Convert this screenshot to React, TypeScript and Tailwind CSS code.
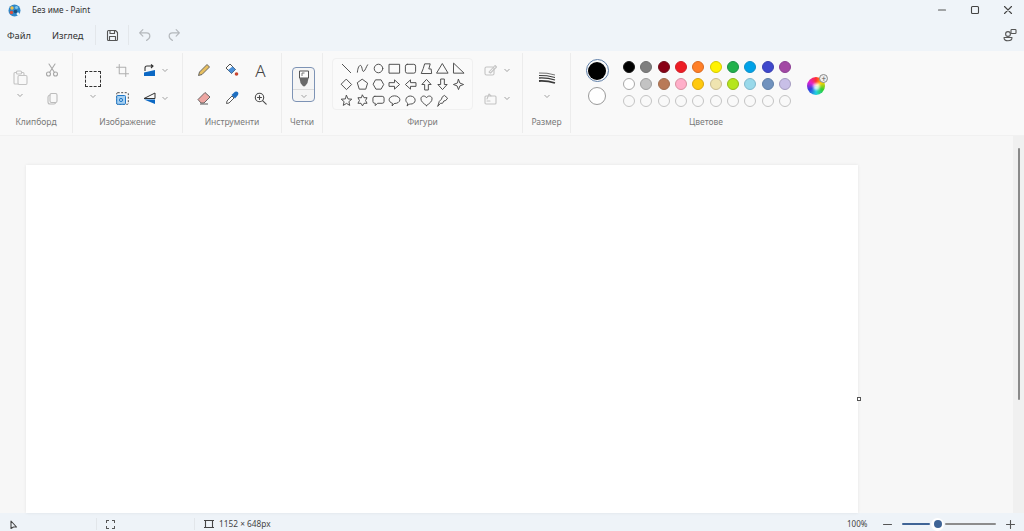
import { ReactNode } from "react"

const font = "font-['Noto_Sans',sans-serif]"

const Chevron = ({ className = "" }: { className?: string }) => (
  <svg width="8" height="8" viewBox="0 0 8 8" fill="none" stroke="#969696" strokeWidth="0.9" className={className}>
    <path d="M1.5 3 L4 5.5 L6.5 3" />
  </svg>
)

const Ico = ({ size = 14, vb = 14, children, stroke = "#4a4a4a", sw = 1.1 }: { size?: number; vb?: number; children: ReactNode; stroke?: string; sw?: number }) => (
  <svg width={size} height={size} viewBox={`0 0 ${vb} ${vb}`} fill="none" stroke={stroke} strokeWidth={sw} strokeLinejoin="round" strokeLinecap="round">
    {children}
  </svg>
)

const Label = ({ children }: { children: ReactNode }) => (
  <div className="h-[20px] pt-[1px] flex items-center justify-center text-[8.5px] text-[#7a7a7a] leading-none">{children}</div>
)

const shapes = [
  <path d="M2.5 2.5 L11.5 11.5" />,
  <path d="M1.5 11 C2 4 5 2 6 5 C7 8 7 11 8.5 10 C10 9 11 5 12.5 3" />,
  <circle cx="7" cy="7" r="4.6" />,
  <rect x="1.5" y="2.5" width="11" height="9.5" />,
  <rect x="1.5" y="2.5" width="11" height="9.5" rx="2" />,
  <path d="M1.5 12 L3.5 7 L5 2 H11 L9.5 7.5 H12 L12.5 12 Z" />,
  <path d="M7 2 L13 12 H1 Z" />,
  <path d="M2 1.5 L13 12 H2 Z" />,
  <path d="M7 1.5 L12.5 7 L7 12.5 L1.5 7 Z" />,
  <path d="M7 1.5 L12.5 5.5 L10.5 12 H3.5 L1.5 5.5 Z" />,
  <path d="M4.2 2 H9.8 L12.6 7 L9.8 12 H4.2 L1.4 7 Z" />,
  <path d="M1.5 5 H7 V2 L12.5 7 L7 12 V9 H1.5 Z" />,
  <path d="M12.5 5 H7 V2 L1.5 7 L7 12 V9 H12.5 Z" />,
  <path d="M5 12.5 V7 H2 L7 1.5 L12 7 H9 V12.5 Z" />,
  <path d="M5 1.5 V7 H2 L7 12.5 L12 7 H9 V1.5 Z" />,
  <path d="M7 1.5 L8.5 5.5 L12.5 7 L8.5 8.5 L7 12.5 L5.5 8.5 L1.5 7 L5.5 5.5 Z" />,
  <path d="M7 1.5 L8.6 5.3 L12.7 5.6 L9.6 8.2 L10.5 12.3 L7 10.1 L3.5 12.3 L4.4 8.2 L1.3 5.6 L5.4 5.3 Z" />,
  <path d="M7 1.2 L8.6 4 H11.9 L10.3 7 L11.9 10 H8.6 L7 12.8 L5.4 10 H2.1 L3.7 7 L2.1 4 H5.4 Z" />,
  <path d="M3 2.5 H11 Q13 2.5 13 4.5 V8 Q13 10 11 10 H6 L3.5 12.5 V10 H3 Q1 10 1 8 V4.5 Q1 2.5 3 2.5 Z" />,
  <path d="M4.5 12.5 L4.8 10 C2.6 9.3 1.2 7.9 1.2 6.2 C1.2 3.9 3.8 2 7 2 C10.2 2 12.8 3.9 12.8 6.2 C12.8 8.5 10.2 10.3 7 10.3 Z" />,
  <path d="M3.5 12.5 L4 10 C2.5 9 1.8 7.6 2 6 C2.3 3.6 4.5 2 7.2 2.2 C10 2.4 12.2 4.4 12 7 C11.8 9.4 9.5 11 7 10.8 C6 10.8 5 11.2 3.5 12.5 Z" />,
  <path d="M7 12.5 C3.5 10 1 8 1 5.2 C1 3.4 2.4 2.2 4 2.2 C5.2 2.2 6.3 2.9 7 4 C7.7 2.9 8.8 2.2 10 2.2 C11.6 2.2 13 3.4 13 5.2 C13 8 10.5 10 7 12.5 Z" />,
  <path d="M2 13 L3.5 8 L6 5.5 L6.5 3.5 L9 1.5 L12.5 4.5 L10.5 7 L8.5 7.5 L7 10 H5 L2 13" />,
]

const palette = [
  ["border-[#1a1a1a]", "bg-[#000000]"], ["border-[#6f6f6f]", "bg-[#7f7f7f]"], ["border-[#6f0f1b]", "bg-[#880015]"], ["border-[#d01f28]", "bg-[#ed1c24]"], ["border-[#d96a20]", "bg-[#ff7f27]"],
  ["border-[#d4c900]", "bg-[#fff200]"], ["border-[#1c9048]", "bg-[#22b14c]"], ["border-[#0f8fc8]", "bg-[#00a2e8]"], ["border-[#3a40b0]", "bg-[#3f48cc]"], ["border-[#8c3f94]", "bg-[#a349a4]"],
  ["border-[#a8a8a8]", "bg-white"], ["border-[#a0a0a0]", "bg-[#c3c3c3]"], ["border-[#a06e50]", "bg-[#b97a57]"], ["border-[#d8909f]", "bg-[#ffaec9]"], ["border-[#d9a510]", "bg-[#ffc90e]"],
  ["border-[#c9bc92]", "bg-[#efe4b0]"], ["border-[#95b81c]", "bg-[#b5e61d]"], ["border-[#80b8cc]", "bg-[#99d9ea]"], ["border-[#6080a8]", "bg-[#7092be]"], ["border-[#a49cc0]", "bg-[#c8bfe7]"],
]

const Sep = () => <div className="w-px h-[20px] bg-[#e3e7eb]" />

export default function App() {
  return (
    <div className={`${font} w-full h-[531px] flex flex-col overflow-hidden bg-[#f7f7f7] text-[#3c3c3c]`}>
      {/* title bar */}
      <div className="h-[20px] shrink-0 bg-[#eff4f9] flex items-center">
        <div className="ml-[8px] w-[13px] flex">
          <svg width="13" height="13" viewBox="0 0 13 13">
            <circle cx="6.5" cy="6.5" r="6" fill="#2f87c8" />
            <circle cx="4" cy="4" r="1.7" fill="#f2c14a" />
            <circle cx="8.5" cy="3.5" r="1.6" fill="#7fc6e8" />
            <circle cx="3.5" cy="8.5" r="1.7" fill="#d9503f" />
            <circle cx="7.5" cy="7.5" r="1.8" fill="#16507e" />
            <circle cx="10" cy="10" r="1.4" fill="#eef3f8" />
          </svg>
        </div>
        <div className="ml-[11px] text-[8.2px] text-[#2f2f2f]">Без име - Paint</div>
        <div className="ml-auto flex items-center">
          <div className="w-[33px] flex justify-center"><Ico size={10} vb={10} stroke="#555"><path d="M1.5 5 H8.5" /></Ico></div>
          <div className="w-[33px] flex justify-center"><Ico size={10} vb={10} stroke="#444"><rect x="1.5" y="1.5" width="7" height="7" rx="1" /></Ico></div>
          <div className="w-[33px] flex justify-center"><Ico size={10} vb={10} stroke="#444"><path d="M1.5 1.5 L8.5 8.5 M8.5 1.5 L1.5 8.5" /></Ico></div>
        </div>
      </div>

      {/* menu row */}
      <div className="h-[31px] shrink-0 pb-[1px] bg-[#eff4f9] flex items-center text-[9.3px] text-[#333]">
        <div className="ml-[7px] w-[45px] pt-[2px]">Файл</div>
        <div className="w-[43px] pt-[2px]">Изглед</div>
        <Sep />
        <div className="w-[32px] flex justify-center">
          <Ico size={13} vb={13} stroke="#555">
            <path d="M1.5 2.5 Q1.5 1.5 2.5 1.5 H9.5 L11.5 3.5 V10.5 Q11.5 11.5 10.5 11.5 H2.5 Q1.5 11.5 1.5 10.5 Z" />
            <path d="M4 1.5 V4.5 H8.5 V1.5 M3.5 11.5 V7.5 H9.5 V11.5" />
          </Ico>
        </div>
        <Sep />
        <div className="w-[31px] flex justify-center">
          <Ico size={14} vb={13} stroke="#b4b8bc"><path d="M4.5 1.5 L1.5 4.5 L4.5 7.5 M1.5 4.5 H8 Q11 4.5 11 7.5 Q11 10 8 11.5" /></Ico>
        </div>
        <div className="w-[27px] flex justify-center">
          <Ico size={14} vb={13} stroke="#b4b8bc"><path d="M8.5 1.5 L11.5 4.5 L8.5 7.5 M11.5 4.5 H5 Q2 4.5 2 7.5 Q2 10 5 11.5" /></Ico>
        </div>
        <div className="ml-auto mr-[7px] flex">
          <Ico size={14} vb={14} stroke="#555">
            <rect x="8" y="1.5" width="5" height="4" rx="0.8" />
            <circle cx="5" cy="6" r="2.4" />
            <path d="M1 9.5 H9 Q9 12.8 5 12.8 Q1 12.8 1 9.5 Z" />
          </Ico>
        </div>
      </div>

      {/* ribbon */}
      <div className="h-[85px] shrink-0 bg-[#f9f9f9] border-b border-[#f1f1f1] flex py-[2px]">
        {/* clipboard */}
        <div className="w-[73px] border-r border-[#ececec] flex flex-col">
          <div className="h-[59px] pt-[3px] pl-[4px] flex">
            <div className="w-[32px] flex flex-col items-center pt-[13px]">
              <Ico size={17} vb={17} stroke="#c4c4c4">
                <path d="M4 3.5 H3 Q2 3.5 2 4.5 V14 Q2 15 3 15 H6 M10 3.5 H11 Q12 3.5 12 4.5 V6" />
                <rect x="4.5" y="2" width="5" height="3" rx="1" />
                <rect x="6" y="6.5" width="9" height="9" rx="1.2" />
              </Ico>
              <Chevron className="mt-[5px]" />
            </div>
            <div className="w-[32px] flex flex-col items-center">
              <div className="h-[28px] flex items-center justify-center">
                <Ico size={14} vb={14} stroke="#a8a8a8">
                  <circle cx="3.5" cy="11" r="2" /><circle cx="10.5" cy="11" r="2" />
                  <path d="M4.5 9.5 L10 1 M9.5 9.5 L4 1" />
                </Ico>
              </div>
              <div className="h-[28px] flex items-center justify-center">
                <Ico size={13} vb={13} stroke="#bcbcbc">
                  <rect x="4" y="1.5" width="7" height="9" rx="1.5" />
                  <path d="M4 3 Q2 3.5 2 5 V10 Q2 12 4 12 H8 Q9.5 12 9.5 10.8" />
                </Ico>
              </div>
            </div>
          </div>
          <Label>Клипборд</Label>
        </div>

        {/* image */}
        <div className="w-[110px] border-r border-[#ececec] flex flex-col">
          <div className="h-[59px] pt-[3px] pl-[6px] flex">
            <div className="w-[28px] flex flex-col items-center pt-[15px]">
              <div className="w-[16px] h-[16px] border border-dashed border-[#333]" />
              <Chevron className="mt-[5px]" />
            </div>
            <div className="w-[28px] ml-px flex flex-col items-center">
              <div className="h-[28px] flex items-center justify-center">
                <Ico size={13} vb={14} stroke="#b0b0b0"><path d="M3.5 0.5 V10.5 H13.5 M0.5 3.5 H10.5 V13.5" /></Ico>
              </div>
              <div className="h-[28px] flex items-center justify-center">
                <svg width="13" height="13" viewBox="0 0 13 13" fill="none">
                  <rect x="0.7" y="0.7" width="11.6" height="11.6" rx="1" stroke="#4a4a4a" strokeDasharray="2 1.5" />
                  <rect x="0.7" y="3.5" width="8.8" height="8.8" rx="1" fill="#a8d0f0" stroke="#1f78c8" />
                  <circle cx="5" cy="8" r="1.6" fill="none" stroke="#1f78c8" />
                </svg>
              </div>
            </div>
            <div className="ml-[7px] flex flex-col">
              <div className="h-[28px] flex items-center gap-[5px]">
                <svg width="13" height="13" viewBox="0 0 13 13" fill="none">
                  <path d="M1 8.5 L12 6 V12 H1 Z" fill="#0b68c4" />
                  <path d="M2 7 V4 Q2 2 4 2 H10 M8 0.5 L10 2 L8 4" stroke="#333" strokeWidth="1.1" />
                </svg>
                <Chevron />
              </div>
              <div className="h-[28px] flex items-center gap-[5px]">
                <svg width="13" height="13" viewBox="0 0 13 13" fill="none">
                  <path d="M12 1 L1 6.5 H12 Z" stroke="#333" strokeWidth="1" />
                  <path d="M12 12 L1 7.5 H12 Z" fill="#0b68c4" />
                </svg>
                <Chevron />
              </div>
            </div>
          </div>
          <Label>Изображение</Label>
        </div>

        {/* tools */}
        <div className="w-[99px] border-r border-[#ececec] flex flex-col">
          <div className="h-[59px] pt-[3px] px-[7px] grid grid-cols-3 grid-rows-[28px_28px] justify-items-center items-center">
            <svg width="14" height="14" viewBox="0 0 14 14" fill="none">
              <path d="M1.5 12.5 L2.5 9 L10 1.5 L12.5 4 L5 11.5 Z" fill="#e7bf60" stroke="#5a5a5a" strokeWidth="0.9" strokeLinejoin="round" />
            </svg>
            <svg width="14" height="14" viewBox="0 0 14 14" fill="none">
              <path d="M1 5 L5 1 L10.5 6.5 L6.5 10.5 Z" fill="#fff" stroke="#3a3a3a" strokeWidth="0.9" strokeLinejoin="round" />
              <path d="M3 7 L7.5 3.5 L10.5 6.5 L6.5 10.5 Z" fill="#4a90d9" />
              <circle cx="11.5" cy="11" r="1.8" fill="#c9452f" />
            </svg>
            <div className="text-[17px] leading-none font-light text-[#444] ml-[1px]">A</div>
            <svg width="14" height="14" viewBox="0 0 14 14" fill="none">
              <path d="M1 8.5 L8 1.5 L13 6 L7 12 H4 Z" fill="#eda6a2" stroke="#5a5a5a" strokeWidth="0.9" strokeLinejoin="round" />
              <path d="M3 13 H11" stroke="#5a5a5a" />
            </svg>
            <svg width="14" height="14" viewBox="0 0 14 14" fill="none">
              <path d="M1.5 12.5 L2 10 L7 5 L9 7 L4 12 Z" fill="#fff" stroke="#4a4a4a" strokeWidth="0.9" strokeLinejoin="round" />
              <path d="M6.5 4 L10 0.8 Q11.5 0 13 1.2 Q13.8 2.5 13 4 L10 7.5 Z" fill="#1f6fc0" />
            </svg>
            <Ico size={13} vb={13} stroke="#4a4a4a">
              <circle cx="5.5" cy="5.5" r="4.2" /><path d="M8.8 8.8 L12.2 12.2 M3.5 5.5 H7.5 M5.5 3.5 V7.5" />
            </Ico>
          </div>
          <Label>Инструменти</Label>
        </div>

        {/* brushes */}
        <div className="w-[41px] border-r border-[#ececec] flex flex-col">
          <div className="h-[59px] pt-[14px] pl-[10px]">
            <div className="w-[23px] h-[35px] rounded-[4px] border-[1.5px] border-[#7d93b5] bg-[#f5f5f5] flex flex-col">
              <div className="h-[21px] flex items-center justify-center">
                <svg width="12" height="17" viewBox="0 0 12 17" fill="none">
                  <path d="M1.5 1 H10.5 V8 H1.5 Z" fill="#fff" stroke="#555" />
                  <path d="M1.5 8 H10.5 L9.5 13 Q7 16.5 6 16.5 Q5 16.5 2.5 13 Z" fill="#6a6a6a" />
                  <path d="M4 3 H6.5 M4 3 V6" stroke="#777" />
                </svg>
              </div>
              <div className="flex-1 border-t border-[#dcdcdc] flex items-center justify-center"><Chevron /></div>
            </div>
          </div>
          <Label>Четки</Label>
        </div>

        {/* shapes */}
        <div className="w-[200px] border-r border-[#ececec] flex flex-col">
          <div className="h-[59px] pt-[5px] pl-[9px] flex">
            <div className="w-[141px] h-[52px] rounded-[4px] border border-[#f0f0f0] bg-[#fafafa] pl-[5px] pt-[1px] grid grid-cols-[repeat(8,16px)] grid-rows-[16px_16px_16px]">
              {shapes.map((s, i) => (
                <div key={i} className="flex items-center justify-center">
                  <Ico size={13} vb={14} stroke="#4e4e4e" sw={1.05}>{s}</Ico>
                </div>
              ))}
            </div>
            <div className="ml-[11px] -mt-[2px] flex flex-col">
              <div className="h-[28px] flex items-center gap-[6px]">
                <Ico size={13} vb={13} stroke="#c4c4c4"><rect x="1" y="3" width="9" height="8" rx="1.5" /><path d="M5 8 L11 1.5 L12.5 3 L6.5 9 Z" /></Ico>
                <Chevron />
              </div>
              <div className="h-[28px] flex items-center gap-[6px]">
                <Ico size={13} vb={13} stroke="#c4c4c4"><rect x="1" y="4" width="11" height="8" rx="1" /><path d="M3 7 L5 2 L7 4 M3 9 H6" /></Ico>
                <Chevron />
              </div>
            </div>
          </div>
          <Label>Фигури</Label>
        </div>

        {/* size */}
        <div className="w-[48px] border-r border-[#ececec] flex flex-col">
          <div className="h-[59px] pt-[19px] pl-[1px] flex flex-col items-center">
            <svg width="18" height="13" viewBox="0 0 18 13" fill="none" stroke="#3a3a3a">
              <path d="M1 1 Q9 0.5 17 3" strokeWidth="0.7" />
              <path d="M1 3.5 Q9 3 17 5.5" strokeWidth="1" />
              <path d="M1 6 Q9 5.5 17 8" strokeWidth="1.3" />
              <path d="M1 9 Q9 8.5 17 11" strokeWidth="1.8" />
            </svg>
            <Chevron className="mt-[7px]" />
          </div>
          <Label>Размер</Label>
        </div>

        {/* colours */}
        <div className="w-[278px] flex flex-col">
          <div className="h-[59px] pt-[5px] flex">
            <div className="w-[50px] flex flex-col items-center pl-[2px]">
              <div className="w-[23px] h-[23px] mt-[1px] rounded-full border border-[#5f7fa8] flex items-center justify-center">
                <div className="w-[18px] h-[18px] rounded-full bg-black" />
              </div>
              <div className="w-[18px] h-[18px] mt-[5px] rounded-full bg-white border border-[#9a9a9a]" />
            </div>
            <div className="-ml-[0.5px] grid grid-cols-[repeat(10,17.33px)] auto-rows-[17.3px] justify-items-center items-center">
              {palette.map(([b, c], i) => (
                <div key={i} className={`w-[12px] h-[12px] rounded-full border ${b} ${c}`} />
              ))}
              {Array.from({ length: 10 }).map((_, i) => (
                <div key={i} className="w-[12px] h-[12px] rounded-full border border-[#c4c4c4]" />
              ))}
            </div>
            <div className="ml-[13.5px] mt-[19px] relative w-[18px] h-[18px] rounded-full bg-[conic-gradient(#ff3030,#ffd000,#30d030,#20d0e0,#3040e0,#e020d0,#ff3030)] flex items-center justify-center">
              <div className="w-[7px] h-[7px] rounded-full bg-white/80 blur-[1px]" />
              <div className="absolute -top-[3px] -right-[3px] w-[9px] h-[9px] rounded-full bg-[#efefef] border border-[#8a8a8a] flex items-center justify-center text-[8px] leading-none text-[#555]">+</div>
            </div>
          </div>
          <div className="pr-[8px]"><Label>Цветове</Label></div>
        </div>
      </div>

      {/* workspace */}
      <div className="flex-1 min-h-0 flex">
        <div className="flex-1 pl-[26px] pt-[29px]">
          <div className="relative w-[832px] h-[348px] bg-white shadow-[0_0_3px_rgba(0,0,0,0.08)]">
            <div className="absolute left-[831px] top-[232px] w-[4px] h-[4px] border border-[#555] bg-white" />
          </div>
        </div>
        <div className="w-[11px] bg-[#f0f0f0] pt-[12px] flex justify-center pl-[1px]">
          <div className="w-[2px] h-[252px] rounded-full bg-[#8a8a8a]" />
        </div>
      </div>

      {/* status bar */}
      <div className="h-[18px] shrink-0 pt-[4px] bg-[#eef3f8] flex items-center text-[8.3px] text-[#444]">
        <div className="w-[97px] pl-[9px] border-r border-[#e2e6ea] h-[12px] flex items-center">
          <Ico size={9} vb={9} stroke="#444"><path d="M2 1 L7.5 7 H4.5 L2 8.5 Z" /></Ico>
        </div>
        <div className="w-[98px] pl-[9px] border-r border-[#e2e6ea] h-[12px] flex items-center">
          <div className="w-[9px] h-[9px] border border-dashed border-[#555] rounded-[1px]" />
        </div>
        <div className="ml-[9px] flex items-center">
          <Ico size={10} vb={10} stroke="#444"><rect x="1.5" y="1.5" width="7" height="7" /><path d="M0 1.5 H1.5 M8.5 1.5 H10 M0 8.5 H1.5 M8.5 8.5 H10" /></Ico>
          <div className="ml-[5px]">1152 × 648px</div>
        </div>
        <div className="ml-auto w-[36px] text-[8px]">100%</div>
        <Ico size={9} vb={9} stroke="#555"><path d="M0.5 4.5 H8.5" /></Ico>
        <div className="ml-[10px] w-[94px] flex items-center">
          <div className="w-[28px] h-[2px] rounded-full bg-[#3f6496]" />
          <div className="w-[13px] h-[13px] ml-[1px] rounded-full bg-white flex items-center justify-center">
            <div className="w-[8px] h-[8px] rounded-full bg-[#3f6496]" />
          </div>
          <div className="ml-[1px] flex-1 h-[2px] rounded-full bg-[#8c8c8c]" />
        </div>
        <div className="ml-[10px] mr-[9px] flex"><Ico size={9} vb={9} stroke="#555"><path d="M0.5 4.5 H8.5 M4.5 0.5 V8.5" /></Ico></div>
      </div>
    </div>
  )
}
